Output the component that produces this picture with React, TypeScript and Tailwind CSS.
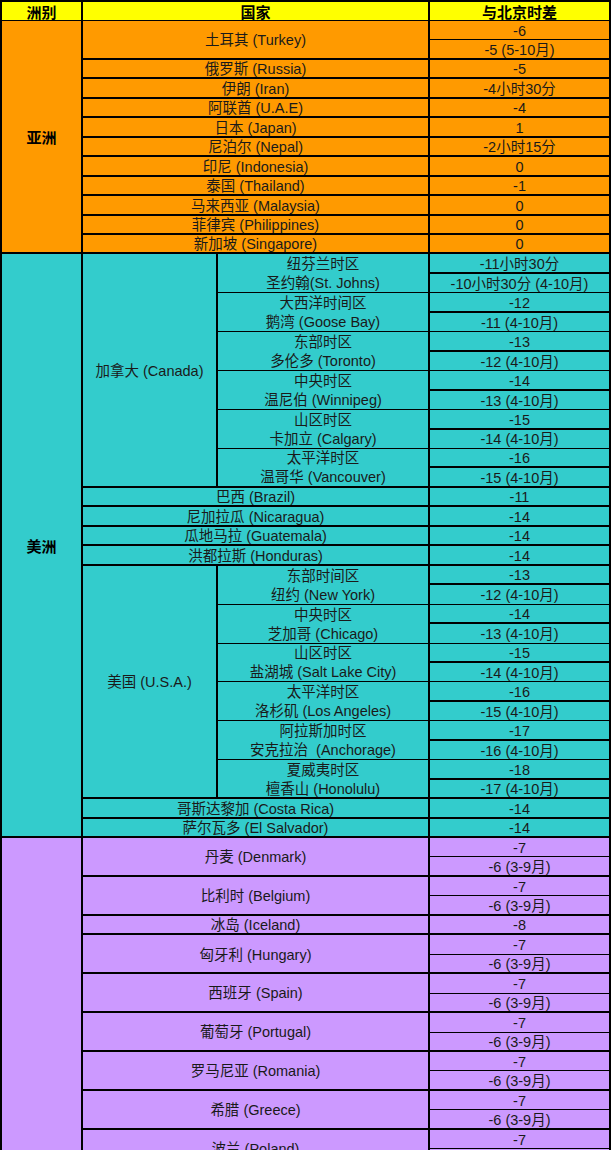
import type { ReactNode } from 'react'
import clsx from 'clsx'

type Simple = [string, string]
type Paired = [string, string, string]
type Zone = [string, string, string, string]

const ASIA_SIMPLE: Simple[] = [
  ['俄罗斯 (Russia)', '-5'],
  ['伊朗 (Iran)', '-4小时30分'],
  ['阿联酋 (U.A.E)', '-4'],
  ['日本 (Japan)', '1'],
  ['尼泊尔 (Nepal)', '-2小时15分'],
  ['印尼 (Indonesia)', '0'],
  ['泰国 (Thailand)', '-1'],
  ['马来西亚 (Malaysia)', '0'],
  ['菲律宾 (Philippines)', '0'],
  ['新加坡 (Singapore)', '0'],
]

const CANADA: Zone[] = [
  ['纽芬兰时区', '圣约翰(St. Johns)', '-11小时30分', '-10小时30分 (4-10月)'],
  ['大西洋时间区', '鹅湾 (Goose Bay)', '-12', '-11 (4-10月)'],
  ['东部时区', '多伦多 (Toronto)', '-13', '-12 (4-10月)'],
  ['中央时区', '温尼伯 (Winnipeg)', '-14', '-13 (4-10月)'],
  ['山区时区', '卡加立 (Calgary)', '-15', '-14 (4-10月)'],
  ['太平洋时区', '温哥华 (Vancouver)', '-16', '-15 (4-10月)'],
]

const CENTRAL: Simple[] = [
  ['巴西 (Brazil)', '-11'],
  ['尼加拉瓜 (Nicaragua)', '-14'],
  ['瓜地马拉 (Guatemala)', '-14'],
  ['洪都拉斯 (Honduras)', '-14'],
]

const USA: Zone[] = [
  ['东部时间区', '纽约 (New York)', '-13', '-12 (4-10月)'],
  ['中央时区', '芝加哥 (Chicago)', '-14', '-13 (4-10月)'],
  ['山区时区', '盐湖城 (Salt Lake City)', '-15', '-14 (4-10月)'],
  ['太平洋时区', '洛杉矶 (Los Angeles)', '-16', '-15 (4-10月)'],
  ['阿拉斯加时区', '安克拉治\u00a0 (Anchorage)', '-17', '-16 (4-10月)'],
  ['夏威夷时区', '檀香山 (Honolulu)', '-18', '-17 (4-10月)'],
]

const SOUTH: Simple[] = [
  ['哥斯达黎加 (Costa Rica)', '-14'],
  ['萨尔瓦多 (El Salvador)', '-14'],
]

// 冰岛 sits between 比利时 and 匈牙利 as a single row
const EUROPE_A: Paired[] = [
  ['丹麦 (Denmark)', '-7', '-6 (3-9月)'],
  ['比利时 (Belgium)', '-7', '-6 (3-9月)'],
]
const EUROPE_B: Paired[] = [
  ['匈牙利 (Hungary)', '-7', '-6 (3-9月)'],
  ['西班牙 (Spain)', '-7', '-6 (3-9月)'],
  ['葡萄牙 (Portugal)', '-7', '-6 (3-9月)'],
  ['罗马尼亚 (Romania)', '-7', '-6 (3-9月)'],
  ['希腊 (Greece)', '-7', '-6 (3-9月)'],
  ['波兰 (Poland)', '-7', '-6 (3-9月)'],
]

function Cell({ className, children }: { className?: string; children?: ReactNode }) {
  return (
    <div className={clsx('flex items-center justify-center border-r-2 border-black pt-[2px] text-center whitespace-nowrap', className)}>
      {children}
    </div>
  )
}

function SimpleRows({ rows, bg }: { rows: Simple[]; bg: string }) {
  return (
    <>
      {rows.map(([name, diff]) => (
        <div key={name} className="contents">
          <Cell className={clsx('col-span-2 border-b-2', bg)}>{name}</Cell>
          <Cell className={clsx('border-b-2', bg)}>{diff}</Cell>
        </div>
      ))}
    </>
  )
}

function PairedRows({ rows, bg }: { rows: Paired[]; bg: string }) {
  return (
    <>
      {rows.map(([name, a, b]) => (
        <div key={name} className="contents">
          <Cell className={clsx('col-span-2 row-span-2 border-b-2', bg)}>{name}</Cell>
          <Cell className={clsx('border-b', bg)}>{a}</Cell>
          <Cell className={clsx('border-b-2', bg)}>{b}</Cell>
        </div>
      ))}
    </>
  )
}

function ZoneRows({ zones, bg }: { zones: Zone[]; bg: string }) {
  return (
    <>
      {zones.map(([zone, city, a, b], i) => {
        const last = i === zones.length - 1
        return (
          <div key={zone + city} className="contents">
            <Cell className={clsx('row-span-2 flex-col leading-[19px]', last ? 'border-b-2' : 'border-b', bg)}>
              <span>{zone}</span>
              <span>{city}</span>
            </Cell>
            <Cell className={clsx('border-b-2', bg)}>{a}</Cell>
            <Cell className={clsx(last ? 'border-b-2' : 'border-b', bg)}>{b}</Cell>
          </div>
        )
      })}
    </>
  )
}

export default function App() {
  const asia = 'bg-[#ff9a00]'
  const america = 'bg-[#33cccc]'
  const europe = 'bg-[#cc99ff]'

  return (
    <div className="h-[1150px] w-[611px] overflow-hidden bg-white">
      <div className="grid grid-cols-[81px_135px_212px_181px] grid-rows-[19px] auto-rows-[19.456px] border-t-2 border-l-2 border-black font-['Liberation_Sans','Noto_Sans_CJK_SC',sans-serif] text-[14.5px] leading-none text-[#1a1a1a]">
        {/* header */}
        <Cell className="border-b bg-[#ffff00] text-[15px] font-bold text-black">洲别</Cell>
        <Cell className="col-span-2 border-b bg-[#ffff00] text-[15px] font-bold text-black">国家</Cell>
        <Cell className="border-b bg-[#ffff00] text-[15px] font-bold text-black">与北京时差</Cell>

        {/* 亚洲 */}
        <Cell className={clsx('row-span-12 border-b-2 text-[15px] font-bold text-black', asia)}>亚洲</Cell>
        <Cell className={clsx('col-span-2 row-span-2 border-b-2', asia)}>土耳其 (Turkey)</Cell>
        <Cell className={clsx('border-b', asia)}>-6</Cell>
        <Cell className={clsx('border-b-2', asia)}>-5 (5-10月)</Cell>
        <SimpleRows rows={ASIA_SIMPLE} bg={asia} />

        {/* 美洲 */}
        <Cell className={clsx('row-span-30 border-b-2 text-[15px] font-bold text-black', america)}>美洲</Cell>
        <Cell className={clsx('row-span-12 border-b-2', america)}>加拿大 (Canada)</Cell>
        <ZoneRows zones={CANADA} bg={america} />
        <SimpleRows rows={CENTRAL} bg={america} />
        <Cell className={clsx('row-span-12 border-b-2', america)}>美国 (U.S.A.)</Cell>
        <ZoneRows zones={USA} bg={america} />
        <SimpleRows rows={SOUTH} bg={america} />

        {/* 欧洲: its label sits further down, below the visible part */}
        <Cell className={clsx('row-span-17 border-b-2', europe)} />
        <PairedRows rows={EUROPE_A} bg={europe} />
        <SimpleRows rows={[['冰岛 (Iceland)', '-8']]} bg={europe} />
        <PairedRows rows={EUROPE_B} bg={europe} />
      </div>
    </div>
  )
}
